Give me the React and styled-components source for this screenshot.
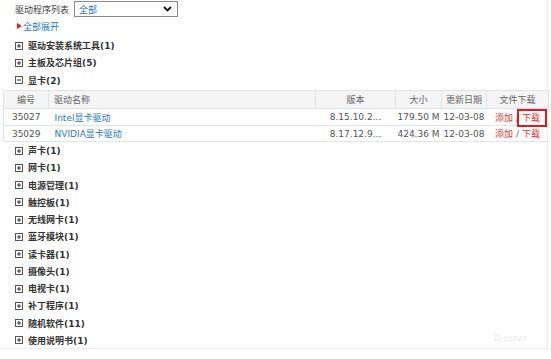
import React from "react";
import styled, { createGlobalStyle } from "styled-components";

const Global = createGlobalStyle`
  html, body { margin: 0; padding: 0; background: #fff; }
  body { font-family: "DejaVu Sans", "Noto Sans CJK SC", sans-serif; font-size: 9px; color: #333; }
`;

const Page = styled.div`
  position: relative;
  width: 548px;
  height: 349px;
  box-sizing: border-box;
  border-right: 1px solid #ececec;
  border-bottom: 1px solid #ececec;
`;

const Toolbar = styled.div`
  display: flex;
  align-items: center;
  height: 18px;
  padding-left: 15px;
  gap: 5px;
`;

const Label = styled.span`
  color: #444;
  font-size: 9px;
`;

const Select = styled.div`
  display: flex;
  align-items: center;
  justify-content: space-between;
  width: 104px;
  height: 16px;
  box-sizing: border-box;
  border: 1px solid #8a8a8a;
  padding: 0 5px 0 4px;
  color: #1f6fbf;
  font-size: 9px;
  background: #fff;
`;

const ExpandRow = styled.div`
  display: flex;
  align-items: center;
  height: 16px;
  padding-left: 17px;
  gap: 1px;
  color: #1f7ac0;
  font-size: 9px;
`;

const Triangle = styled.span`
  width: 0;
  height: 0;
  border-left: 5px solid #e0201d;
  border-top: 3px solid transparent;
  border-bottom: 3px solid transparent;
`;

const List = styled.div`
  margin-top: ${(p) => p.$top || 0}px;
`;

const Category = styled.div`
  display: flex;
  align-items: center;
  height: 17.25px;
  padding-left: 15px;
  gap: 5px;
  font-weight: bold;
  color: #333;
  font-size: 9px;
`;

const Table = styled.table`
  margin: 1.25px 0 0 3px;
  width: 545px;
  border-collapse: collapse;
  table-layout: fixed;
  font-size: 9px;
  border-left: 1px solid #e1e5ea;
`;

const Th = styled.th`
  height: 17px;
  padding: 0;
  font-weight: normal;
  color: #666;
  background: #f5f5f5;
  border-top: 1px solid #e1e5ea;
  border-bottom: 1px solid #e1e5ea;
  border-right: 1px solid #e1e5ea;
  text-align: ${(p) => p.$align || "center"};
  padding-left: ${(p) => (p.$align === "left" ? "5px" : "0")};
`;

const Td = styled.td`
  height: ${(p) => p.$h || 16}px;
  padding: 0;
  color: #555;
  border-bottom: 1px solid #e1e5ea;
  text-align: ${(p) => p.$align || "center"};
  padding-left: ${(p) => (p.$align === "left" ? "6px" : "0")};
  white-space: nowrap;
`;

const NameLink = styled.a`
  color: #1f7ac0;
  text-decoration: none;
`;

const RedLink = styled.a`
  position: relative;
  color: #e3302a;
  text-decoration: none;
  &::after {
    content: "";
    display: ${(p) => (p.$boxed ? "block" : "none")};
    position: absolute;
    left: -5px;
    right: -7px;
    top: -4px;
    bottom: -4px;
    border: 2px solid #e8151b;
  }
`;

const Slash = styled.span`
  color: #666;
  margin: 0 3px;
`;

const Watermark = styled.span`
  position: absolute;
  left: 493px;
  top: 334px;
  color: #ebebeb;
  font-family: "DejaVu Sans Mono", monospace;
  font-size: 8px;
`;

const BoxIcon = ({ minus }) => (
  <svg width="8" height="8" viewBox="0 0 8 8">
    <rect x="0.5" y="0.5" width="7" height="7" fill="#fff" stroke="#555" />
    <path d="M2 4h4" stroke="#333" />
    {!minus && <path d="M4 2v4" stroke="#333" />}
  </svg>
);

const Chevron = () => (
  <svg width="9" height="6" viewBox="0 0 9 6">
    <path d="M1 1l3.5 3.5L8 1" fill="none" stroke="#111" strokeWidth="1.8" />
  </svg>
);

const before = [
  ["驱动安装系统工具", 1],
  ["主板及芯片组", 5],
  ["显卡", 2, true],
];
const after = [
  ["声卡", 1],
  ["网卡", 1],
  ["电源管理", 1],
  ["触控板", 1],
  ["无线网卡", 1],
  ["蓝牙模块", 1],
  ["读卡器", 1],
  ["摄像头", 1],
  ["电视卡", 1],
  ["补丁程序", 1],
  ["随机软件", 11],
  ["使用说明书", 1],
];

const rows = [
  { id: "35027", name: "Intel显卡驱动", ver: "8.15.10.2...", size: "179.50 M", date: "12-03-08", boxed: true, h: 16 },
  { id: "35029", name: "NVIDIA显卡驱动", ver: "8.17.12.9...", size: "424.36 M", date: "12-03-08", h: 15 },
];

export default function App() {
  return (
    <>
      <Global />
      <Page>
        <Toolbar>
          <Label>驱动程序列表</Label>
          <Select>
            <span>全部</span>
            <Chevron />
          </Select>
        </Toolbar>
        <ExpandRow>
          <Triangle />
          <span>全部展开</span>
        </ExpandRow>
        <List $top={3}>
          {before.map(([n, c, open]) => (
            <Category key={n}>
              <BoxIcon minus={open} />
              <span>{n}({c})</span>
            </Category>
          ))}
        </List>
        <Table>
          <colgroup>
            <col style={{ width: 45 }} />
            <col style={{ width: 267 }} />
            <col style={{ width: 80 }} />
            <col style={{ width: 46 }} />
            <col style={{ width: 45 }} />
            <col style={{ width: 62 }} />
          </colgroup>
          <thead>
            <tr>
              <Th>编号</Th>
              <Th $align="left">驱动名称</Th>
              <Th>版本</Th>
              <Th>大小</Th>
              <Th>更新日期</Th>
              <Th>文件下载</Th>
            </tr>
          </thead>
          <tbody>
            {rows.map((r) => (
              <tr key={r.id}>
                <Td $h={r.h}>{r.id}</Td>
                <Td $h={r.h} $align="left"><NameLink>{r.name}</NameLink></Td>
                <Td $h={r.h}>{r.ver}</Td>
                <Td $h={r.h}>{r.size}</Td>
                <Td $h={r.h}>{r.date}</Td>
                <Td $h={r.h}>
                  <RedLink>添加</RedLink>
                  <Slash>/</Slash>
                  <RedLink $boxed={r.boxed}>下载</RedLink>
                </Td>
              </tr>
            ))}
          </tbody>
        </Table>
        <List>
          {after.map(([n, c]) => (
            <Category key={n}>
              <BoxIcon />
              <span>{n}({c})</span>
            </Category>
          ))}
        </List>
        <Watermark>ZLenovo</Watermark>
      </Page>
    </>
  );
}
